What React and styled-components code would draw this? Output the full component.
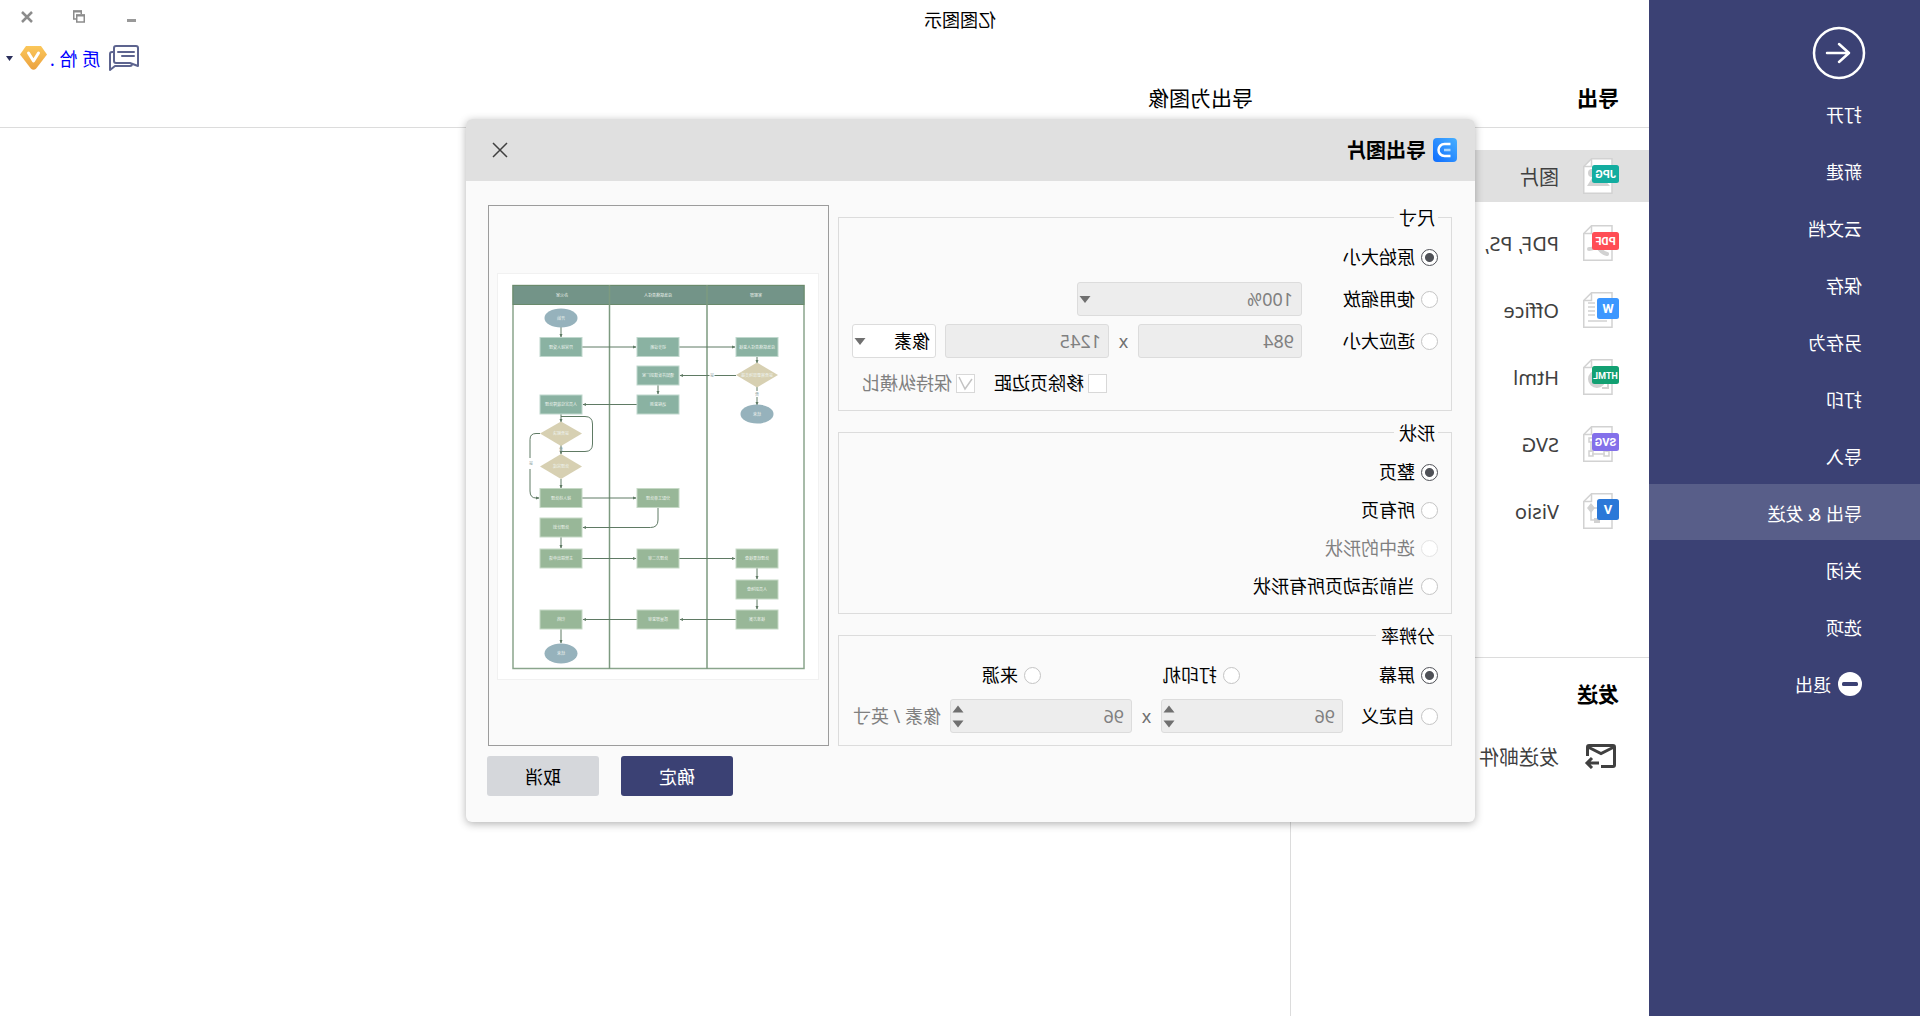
// App.jsx
import React, { useState } from 'react';
import styled, { createGlobalStyle } from 'styled-components';

const GlobalStyle = createGlobalStyle`
  * {
    box-sizing: border-box;
  }

  body {
    margin: 0;
    background-color: #ffffff;
    overflow-x: hidden;
  }

  body, button, input, select {
    font-family: 'Noto Sans', 'Noto Sans CJK SC', sans-serif;
    font-size: 18px;
    font-weight: 400;
    color: #000000;
  }
`;

// the whole window is flipped left to right
const Window = styled.div`
  position: relative;
  display: flex;
  min-height: 100vh;
  background-color: #ffffff;
  line-height: 24px;
  transform: scaleX(-1);
`;

const Sidebar = styled.nav`
  display: flex;
  flex-direction: column;
  gap: 1px;
  width: 271px;
  flex-shrink: 0;
  background-color: #3b4174;
`;

const BackButton = styled.button`
  width: 54px;
  height: 54px;
  margin: 26px 0 4px 54px;
  padding: 0;
  border: none;
  background: none;
  cursor: pointer;
`;

const SideItem = styled.button`
  display: flex;
  align-items: center;
  gap: 7px;
  height: 56px;
  padding: 2px 0 0 58px;
  border: none;
  background-color: ${(props) => (props.$active ? '#585e89' : 'transparent')};
  color: #ffffff;
  text-align: left;
  cursor: pointer;
`;

const Main = styled.main`
  display: flex;
  flex-direction: column;
  flex: 1;
  min-width: 0;
`;

const TitleBar = styled.header`
  display: grid;
  grid-template-columns: 1fr 271px;
  height: 40px;
`;

const AppTitle = styled.div`
  text-align: center;
  line-height: 40px;
`;

const WindowButtons = styled.div`
  display: flex;
  justify-content: flex-end;
  height: 33px;
  padding-right: 1px;
`;

const WindowButton = styled.button`
  display: flex;
  align-items: center;
  justify-content: center;
  width: 52px;
  padding: 0;
  border: none;
  background: none;
`;

const AccountBar = styled.div`
  display: flex;
  align-items: center;
  justify-content: flex-end;
  height: 36px;
  padding-right: 6px;
`;

const AccountLink = styled.a`
  margin: 0 3px 0 9px;
  padding-top: 2px;
  color: #0000ff;
  text-decoration: none;
`;

const CaretSpace = styled.span`
  display: flex;
  margin-left: 7px;
`;

const Headings = styled.div`
  display: flex;
  height: 52px;
  border-bottom: 1px solid #dcdcdc;
  line-height: 44px;
`;

const PageHeading = styled.h1`
  width: 366px;
  margin: 0;
  padding-left: 30px;
  font-size: 21px;
  font-weight: 700;
`;

const TabHeading = styled.h2`
  margin: 0;
  padding-left: 30px;
  font-size: 21px;
  font-weight: 400;
`;

const Columns = styled.div`
  display: flex;
  flex: 1;
`;

const ListColumn = styled.div`
  width: 359px;
  border-right: 1px solid #dcdcdc;
`;

const FormatList = styled.div`
  display: flex;
  flex-direction: column;
  gap: 15px;
  padding: 22px 0 120px;
  border-bottom: 1px solid #dcdcdc;
`;

const FormatItem = styled.button`
  display: flex;
  align-items: center;
  gap: 24px;
  width: 100%;
  height: 52px;
  padding: 0 0 0 30px;
  border: none;
  background-color: ${(props) => (props.$active ? '#e0e0e0' : 'transparent')};
  color: #404040;
  font-size: 20px;
  text-align: left;
  cursor: pointer;
`;

const SendHeading = styled.h2`
  margin: 22px 0;
  padding-left: 30px;
  font-size: 21px;
  line-height: 28px;
  font-weight: 700;
`;

const Overlay = styled.div`
  position: absolute;
  inset: 0;
  display: flex;
  align-items: flex-start;
  justify-content: center;
  padding: 119px 21px 0 0;
`;

const Dialog = styled.div`
  width: 1009px;
  border-radius: 6px;
  background-color: #fafafa;
  box-shadow: 0 2px 8px rgba(0, 0, 0, 0.3);
  overflow: hidden;
`;

const DialogHeader = styled.div`
  display: flex;
  align-items: center;
  gap: 7px;
  height: 62px;
  padding: 0 26px 0 18px;
  background-color: #e0e0e0;
`;

const DialogTitle = styled.h2`
  flex: 1;
  margin: 0;
  padding-top: 2px;
  font-size: 20px;
  font-weight: 700;
`;

const CloseButton = styled.button`
  display: flex;
  padding: 0;
  border: none;
  background: none;
  cursor: pointer;
`;

const DialogBody = styled.div`
  display: flex;
  gap: 9px;
  padding: 24px 22px 0 23px;
`;

const Options = styled.div`
  display: flex;
  flex-direction: column;
  flex: 1;
  gap: 9px;
`;

const Group = styled.fieldset`
  margin: 0;
  padding: 11px 13px 10px;
  border: 1px solid #dcdcdc;

  &:last-child {
    flex: 1;
  }
`;

const Legend = styled.legend`
  padding: 2px 5px 0 3px;
  line-height: 22px;
`;

const Rows = styled.div`
  display: flex;
  flex-direction: column;
  gap: ${(props) => (props.$tight ? '4px' : '7px')};
`;

const SizeGrid = styled.div`
  display: grid;
  grid-template-columns: 136px 164px 29px 173px 84px;
  grid-auto-rows: 34px;
  row-gap: 8px;
  align-items: center;
`;

const Row = styled.div`
  display: flex;
  align-items: center;
  grid-column: 1 / -1;
  height: 34px;
`;

const CheckRow = styled.div`
  display: flex;
  grid-column: 4 / 6;
  gap: 19px;
  padding-left: 2px;
`;

const Label = styled.label`
  display: flex;
  align-items: center;
  gap: ${(props) => (props.$check ? '4px' : '6px')};
  width: ${(props) => props.$width || 'auto'};
  white-space: nowrap;
  color: ${(props) => (props.$muted ? '#808080' : '#000000')};
`;

const RadioInput = styled.input`
  appearance: none;
  width: 17px;
  height: 17px;
  margin: 0;
  border: 1px solid #c4c4c4;
  border-radius: 50%;
  background-color: #ffffff;

  &:checked {
    border-color: #4f5157;
    background: radial-gradient(circle, #4f5157 4px, #ffffff 5px);
  }

  &:disabled {
    border-color: #e4e4e4;
  }
`;

const CheckInput = styled.input`
  appearance: none;
  width: 19px;
  height: 19px;
  margin: 0;
  border: 1px solid #d8d8d8;
  background-color: #ffffff;
`;

const CheckBoxWrap = styled.span`
  position: relative;
  display: flex;

  svg {
    position: absolute;
    inset: 0;
  }
`;

const Field = styled.span`
  position: relative;
  display: block;
  grid-column: ${(props) => props.$column || 'auto'};
  width: ${(props) => props.$width};

  svg {
    position: absolute;
    top: 0;
    right: 2px;
    pointer-events: none;
  }
`;

const TextInput = styled.input`
  display: block;
  width: 100%;
  height: 34px;
  padding: 0 7px;
  border: 1px solid #dcdcdc;
  border-radius: 3px;
  background-color: #ededed;
  color: #808080;
`;

const Select = styled.select`
  display: block;
  appearance: none;
  width: 100%;
  height: 34px;
  padding: 0 ${(props) => (props.disabled ? '8px' : '5px')};
  border: 1px solid #dcdcdc;
  border-radius: 3px;
  background-color: ${(props) => (props.disabled ? '#ededed' : '#ffffff')};
  color: ${(props) => (props.disabled ? '#808080' : '#000000')};
  opacity: 1;
`;

const Times = styled.span`
  width: 29px;
  text-align: center;
  color: #707070;
`;

const Unit = styled.span`
  margin-left: 9px;
  white-space: nowrap;
  color: #808080;
`;

const Preview = styled.div`
  display: flex;
  align-items: center;
  justify-content: center;
  width: 341px;
  height: 541px;
  padding-top: 2px;
  border: 1px solid #9c9c9c;
`;

const DialogFooter = styled.div`
  display: flex;
  justify-content: flex-end;
  gap: 22px;
  padding: 10px 21px 26px;
`;

const ActionButton = styled.button`
  width: 112px;
  height: 40px;
  padding: 0;
  border: none;
  border-radius: 3px;
  background-color: ${(props) => (props.$primary ? '#3b4174' : '#d5d7db')};
  color: ${(props) => (props.$primary ? '#ffffff' : '#000000')};
  cursor: pointer;
`;

const sideItems = ['打开', '新建', '云文档', '保存', '另存为', '打印', '导入', '导出 & 发送', '关闭', '选项'];

const formats = [
  { name: '图片', badge: 'JPG', color: '#13ada0' },
  { name: 'PDF, PS,', badge: 'PDF', color: '#ff4d55' },
  { name: 'Office', badge: 'W', color: '#3c97ff' },
  { name: 'Html', badge: 'HTML', color: '#12a072' },
  { name: 'SVG', badge: 'SVG', color: '#8370ea' },
  { name: 'Visio', badge: 'V', color: '#2b78d8' },
];

// faint drawing behind each badge
const motifs = {
  JPG: (
    <g fill="#d2d2d2">
      <circle cx="27" cy="15" r="4" />
      <path d="M9 28l9-10 5 6 4-4 5 8z" />
    </g>
  ),
  PDF: <path d="M12 29c4-1 8-5 10-9 2 3 5 4 8 4" fill="none" stroke="#d2d2d2" strokeWidth="4" strokeLinecap="round" />,
  W: <path d="M24 11h7M24 15h7M24 19h7M24 23h7M12 29h19" stroke="#d2d2d2" strokeWidth="1.5" />,
  HTML: (
    <g fill="none" stroke="#d2d2d2" strokeWidth="2">
      <circle cx="22" cy="20" r="8" fill="#d2d2d2" />
      <path d="M11 25v4h6" />
    </g>
  ),
  SVG: (
    <g fill="none" stroke="#d2d2d2" strokeWidth="1.5">
      <path d="M14 14h13M14 28h13M12 16v10M28 16v10" />
      <path d="M10 25h5v5h-5zM26 25h4v5h-4zM26 12h4v4h-4z" />
    </g>
  ),
  V: (
    <g fill="#d2d2d2">
      <path d="M28 10l4 5-4 5-4-5zM19 25h6v5h-6z" />
      <path d="M28 15v12h-6M22 15h6" fill="none" stroke="#d2d2d2" strokeWidth="1.5" />
    </g>
  ),
};

function FormatIcon({ badge, color }) {
  const short = badge.length === 1;
  return (
    <svg width="36" height="36" viewBox="0 0 36 36">
      <path d="M7 .75h20.500l7.750 7.750v26.750H7z" fill="#ffffff" stroke="#d2d2d2" strokeWidth="1.500" />
      <path d="M27.500 1v7.500H35" fill="none" stroke="#d2d2d2" strokeWidth="1.500" />
      {motifs[badge]}
      <rect x="0" y={short ? 6 : 7} width={short ? 22 : 27} height={short ? 21 : 18} rx="2.5" fill={color} />
      <text
        x={short ? 11 : 13.5}
        y={short ? 21 : 20}
        textAnchor="middle"
        fontFamily="Roboto, sans-serif"
        fontWeight="700"
        fontSize={short ? 13 : badge.length === 4 ? 9 : 11}
        fill="#ffffff"
      >
        {badge}
      </text>
    </svg>
  );
}

function Arrow() {
  return (
    <svg width="12" height="34" viewBox="0 0 12 34">
      <path d="M0.500 14h11L6 21z" fill="#707070" />
    </svg>
  );
}

function SpinArrows() {
  return (
    <svg width="12" height="34" viewBox="0 0 12 34">
      <path d="M0.500 13.500h11L6 6.500zM0.500 21.500h11L6 28.500z" fill="#707070" />
    </svg>
  );
}

function Radio({ name, label, checked, onSelect, disabled, width }) {
  return (
    <Label $width={width} $muted={disabled}>
      <RadioInput type="radio" name={name} checked={checked} disabled={disabled} onChange={onSelect} />
      {label}
    </Label>
  );
}

// lane centers of the flow chart
const A = 62;
const B = 161;
const C = 258;

const boxes = [
  [C, 74, '异常接入受理'], [B, 74, '初步诊断'], [A, 74, '应急联络责任人复核'],
  [B, 102.5, '通知并反馈到厂家'], [C, 131.5, '人员定位故障处理'], [B, 131.5, '远程复测'],
  [C, 225, '接入待处理'], [B, 225, '分配工单处理'], [C, 254.500, '处理计划'],
  [C, 285.500, '主管提出申请'], [B, 285.500, '处理方二审'], [A, 285.500, '处理结果核查'],
  [A, 316.500, '人员到场查'], [C, 346.500, '归档'], [B, 346.500, '质量部复审'], [A, 346.500, '核准方案'],
];

const lines = [
  'M258 54V64', 'M237 74H183', 'M140 74H84', 'M62 84V90', 'M83 102.5H139', 'M62 114V132',
  'M161 112V121', 'M182 131.5H236', 'M258 141V149', 'M258 172V181', 'M258 206V215', 'M237 225H183',
  'M161 235V247q0 7.500 7.500 7.500H236', 'M258 264V275', 'M237 285.500H183', 'M140 285.500H84',
  'M62 295V306', 'M62 326V336', 'M83 346.500H139', 'M182 346.500H236', 'M258 356V370',
  'M279 160.500h4q6 0 6 6V218q0 7 -6 7h-3',
];

function FlowChart() {
  return (
    <svg width="322" height="407" viewBox="0 0 322 407" fontFamily="'Noto Sans CJK SC', sans-serif">
      <defs>
        <marker id="tip" markerWidth="5" markerHeight="5" refX="3" refY="2" orient="auto" markerUnits="userSpaceOnUse">
          <path d="M0 0.500L3.500 2L0 3.500z" fill="#5f7a64" />
        </marker>
      </defs>
      <rect x="0.5" y="0.5" width="321" height="406" fill="#ffffff" stroke="#f1f1f1" />
      <rect x="15" y="12.500" width="291" height="383" fill="none" stroke="#8aa58c" strokeWidth="1.500" />
      <rect x="15" y="12.500" width="291" height="19" fill="#739488" stroke="#6a8a6c" />
      <path d="M112 12V396M209.500 12V396" stroke="#7d9a80" strokeWidth="1.500" />
      <g stroke="#5f7a64" strokeWidth="1" fill="none">
        {lines.map((d) => (
          <path key={d} d={d} markerEnd="url(#tip)" />
        ))}
        <path d="M258 143.500H234q-7.500 0-7.500 7.500V171q0 7.500 7.500 7.500H258" />
      </g>
      <g fill="#96b2bc">
        <ellipse cx={C} cy="45" rx="16.500" ry="9.500" />
        <ellipse cx={A} cy="141" rx="16.500" ry="9.500" />
        <ellipse cx={C} cy="380.500" rx="16.500" ry="10" />
      </g>
      <g fill="#d7d0b2">
        <path d="M62 89.500l21 12.500-21 12.500-21-12.500z" />
        <path d="M258 148.500l21 12-21 12.500-21-12.500z" />
        <path d="M258 181l21 12.500-21 12.500-21-12.500z" />
      </g>
      {boxes.map(([x, y]) => (
        <rect
          key={`${x}-${y}`}
          x={x - 21}
          y={y - 9.5}
          width="42"
          height="19"
          fill={y < 200 ? '#8ab2a2' : '#98b798'}
          stroke={y < 200 ? '#c0d8cd' : '#c6d9c6'}
          strokeWidth="1"
        />
      ))}
      <path d="M107 99v7M288 185v11M62 118v6" stroke="#ffffff" strokeWidth="5" />
      <g fontSize="4" fill="#eef3ee" textAnchor="middle">
        <text x="63" y="23.500">客服部</text>
        <text x="161" y="23.500">应急联络责任人</text>
        <text x="257" y="23.500">办公室</text>
        {boxes.map(([x, y, text]) => (
          <text key={text} x={x} y={y + 1.5}>{text}</text>
        ))}
        <text x={C} y="46.500">开始</text>
        <text x={A} y="142.500">结束</text>
        <text x={C} y="382">结束</text>
        <text x={A} y="103.500">是否需要现场支援</text>
        <text x={C} y="162">是否解决</text>
        <text x={C} y="195">处理完成</text>
      </g>
      <g fontSize="4" fill="#8aa0a0" textAnchor="middle">
        <text x="107" y="104">是</text>
        <text x="62" y="122.500">否</text>
        <text x="288" y="192">是</text>
        <text x="258" y="178">否</text>
      </g>
    </svg>
  );
}

function ExportDialog() {
  const [size, setSize] = useState('原始大小');
  const [shape, setShape] = useState('整页');
  const [resolution, setResolution] = useState('屏幕');
  const [removeMargin, setRemoveMargin] = useState(false);

  const sizeRadio = (label) => (
    <Radio name="size" label={label} checked={size === label} onSelect={() => setSize(label)} />
  );
  const resolutionRadio = (label, width) => (
    <Radio name="resolution" label={label} width={width} checked={resolution === label} onSelect={() => setResolution(label)} />
  );

  return (
    <Dialog role="dialog" aria-label="导出图片">
      <DialogHeader>
        <svg width="24" height="24" viewBox="0 0 24 24">
          <defs>
            <linearGradient id="logo" x1="0" y1="0" x2="1" y2="1">
              <stop offset="0" stopColor="#48b0ff" />
              <stop offset="1" stopColor="#0d6cff" />
            </linearGradient>
          </defs>
          <rect width="24" height="24" rx="4" fill="url(#logo)" />
          <path d="M6.500 6H12.500a6 6 0 0 1 0 12H6.500" fill="none" stroke="#ffffff" strokeWidth="2.500" />
          <path d="M6.500 12H13" stroke="#a8d6ff" strokeWidth="2.500" />
        </svg>
        <DialogTitle>导出图片</DialogTitle>
        <CloseButton aria-label="关闭">
          <svg width="16" height="16" viewBox="0 0 16 16">
            <path d="M1 1l14 14M15 1L1 15" stroke="#404040" strokeWidth="1.500" />
          </svg>
        </CloseButton>
      </DialogHeader>
      <DialogBody>
        <Options>
          <Group>
            <Legend>尺寸</Legend>
            <SizeGrid>
              <Row>{sizeRadio('原始大小')}</Row>
              {sizeRadio('使用缩放')}
              <Field $column="2 / 6" $width="225px">
                <Select disabled aria-label="缩放">
                  <option>100%</option>
                </Select>
                <Arrow />
              </Field>
              {sizeRadio('适应大小')}
              <Field $width="164px">
                <TextInput aria-label="宽度" defaultValue="984" disabled />
              </Field>
              <Times>x</Times>
              <Field $width="164px">
                <TextInput aria-label="高度" defaultValue="1245" disabled />
              </Field>
              <Field $width="84px">
                <Select aria-label="单位">
                  <option>像素</option>
                </Select>
                <Arrow />
              </Field>
              <CheckRow>
                <Label $check>
                  <CheckInput type="checkbox" checked={removeMargin} onChange={() => setRemoveMargin(!removeMargin)} />
                  移除页边距
                </Label>
                <Label $check $muted>
                  <CheckBoxWrap>
                    <CheckInput type="checkbox" defaultChecked disabled />
                    <svg width="19" height="19" viewBox="0 0 19 19">
                      <path d="M3 3l6 12 7-10" fill="none" stroke="#c4c4c4" strokeWidth="1.500" transform="matrix(-1 0 0 1 19 0)" />
                    </svg>
                  </CheckBoxWrap>
                  保持纵横比
                </Label>
              </CheckRow>
            </SizeGrid>
          </Group>
          <Group>
            <Legend>形状</Legend>
            <Rows $tight>
              {['整页', '所有页', '选中的形状', '当前活动页所有形状'].map((label) => (
                <Row key={label}>
                  <Radio
                    name="shape"
                    label={label}
                    checked={shape === label}
                    disabled={label === '选中的形状'}
                    onSelect={() => setShape(label)}
                  />
                </Row>
              ))}
            </Rows>
          </Group>
          <Group>
            <Legend>分辨率</Legend>
            <Rows>
              <Row>
                {resolutionRadio('屏幕', '198px')}
                {resolutionRadio('打印机', '199px')}
                {resolutionRadio('来源')}
              </Row>
              <Row>
                {resolutionRadio('自定义', '95px')}
                <Field $width="182px">
                  <TextInput aria-label="水平分辨率" defaultValue="96" disabled />
                  <SpinArrows />
                </Field>
                <Times>x</Times>
                <Field $width="182px">
                  <TextInput aria-label="垂直分辨率" defaultValue="96" disabled />
                  <SpinArrows />
                </Field>
                <Unit>像素 / 英寸</Unit>
              </Row>
            </Rows>
          </Group>
        </Options>
        <Preview>
          <FlowChart />
        </Preview>
      </DialogBody>
      <DialogFooter>
        <ActionButton $primary>确定</ActionButton>
        <ActionButton>取消</ActionButton>
      </DialogFooter>
    </Dialog>
  );
}

function App() {
  const [format, setFormat] = useState('图片');

  return (
    <>
      <GlobalStyle />
      <Window>
        <Sidebar>
          <BackButton aria-label="返回">
            <svg width="54" height="54" viewBox="0 0 54 54" fill="none" stroke="#ffffff">
              <circle cx="27" cy="27" r="25" strokeWidth="2.500" />
              <path d="M39 27H17M27 18l-10 9 10 9" strokeWidth="2.500" strokeLinecap="round" strokeLinejoin="round" />
            </svg>
          </BackButton>
          {sideItems.map((item) => (
            <SideItem key={item} $active={item === '导出 & 发送'}>
              {item}
            </SideItem>
          ))}
          <SideItem>
            <svg width="24" height="24" viewBox="0 0 24 24">
              <circle cx="12" cy="12" r="12" fill="#ffffff" />
              <rect x="4" y="10" width="16" height="4" rx="1.500" fill="#3b4174" />
            </svg>
            退出
          </SideItem>
        </Sidebar>
        <Main>
          <TitleBar>
            <AppTitle>亿图图示</AppTitle>
            <WindowButtons>
              <WindowButton aria-label="最小化">
                <svg width="12" height="12" viewBox="0 0 12 12">
                  <rect x="1" y="8" width="9" height="3" fill="#999999" />
                </svg>
              </WindowButton>
              <WindowButton aria-label="还原">
                <svg width="12" height="13" viewBox="0 0 12 13" fill="none" stroke="#8c8c8c" strokeWidth="1.500">
                  <path d="M3.750 4V1H11.250V9H9" />
                  <path d="M3 1.500H12" strokeWidth="2" />
                  <rect x="0.750" y="5" width="7.500" height="7" />
                  <path d="M0 5.500H9" strokeWidth="2" />
                </svg>
              </WindowButton>
              <WindowButton aria-label="关闭窗口">
                <svg width="12" height="12" viewBox="0 0 12 12">
                  <path d="M1 1l10 10M11 1L1 11" stroke="#8c8c8c" strokeWidth="2.500" />
                </svg>
              </WindowButton>
            </WindowButtons>
          </TitleBar>
          <AccountBar>
            <svg width="30" height="26" viewBox="0 0 30 26" fill="none" stroke="#5d648f" strokeWidth="2" strokeLinejoin="round" strokeLinecap="round">
              <path d="M3 1H23q2 0 2 2V16q0 2-2 2H9L1 21V3q0-2 2-2z" />
              <path d="M26 7h1q2 0 2 2V25l-5-4H9q-2 0-2-2" />
              <path d="M5 7H21M5 11H17" />
            </svg>
            <AccountLink href="#account">质 恰 .</AccountLink>
            <svg width="27" height="24" viewBox="0 0 27 24">
              <defs>
                <linearGradient id="gem" x1="0" y1="0" x2="0" y2="1">
                  <stop offset="0" stopColor="#fbc75a" />
                  <stop offset="1" stopColor="#eba13f" />
                </linearGradient>
              </defs>
              <path d="M6 0h15l6 8.500-11 14.200q-2.500 2.300-5 0L0 8.500z" fill="url(#gem)" />
              <path d="M8.500 7l5 8 5-8" fill="none" stroke="#ffffff" strokeWidth="3" strokeLinecap="round" strokeLinejoin="round" />
            </svg>
            <CaretSpace>
              <svg width="7" height="5" viewBox="0 0 7 5">
                <path d="M0 0h7L3.500 5z" fill="#2b2f5c" />
              </svg>
            </CaretSpace>
          </AccountBar>
          <Headings>
            <PageHeading>导出</PageHeading>
            <TabHeading>导出为图像</TabHeading>
          </Headings>
          <Columns>
            <ListColumn>
              <FormatList>
                {formats.map((item) => (
                  <FormatItem key={item.name} $active={format === item.name} onClick={() => setFormat(item.name)}>
                    <FormatIcon badge={item.badge} color={item.color} />
                    {item.name}
                  </FormatItem>
                ))}
              </FormatList>
              <SendHeading>发送</SendHeading>
              <FormatItem>
                <svg width="36" height="26" viewBox="0 0 36 26" fill="none" stroke="#404040" strokeWidth="3">
                  <path d="M18 23.500H6q-1.500 0-1.500-1.500V4q0-1.500 1.500-1.500H30q1.500 0 1.500 1.500V13" />
                  <path d="M5 4l13 6.500L31 4" />
                  <path d="M20 20H31M27 15l5 5-5 5" />
                </svg>
                发送邮件
              </FormatItem>
            </ListColumn>
          </Columns>
        </Main>
        <Overlay>
          <ExportDialog />
        </Overlay>
      </Window>
    </>
  );
}

export default App;
